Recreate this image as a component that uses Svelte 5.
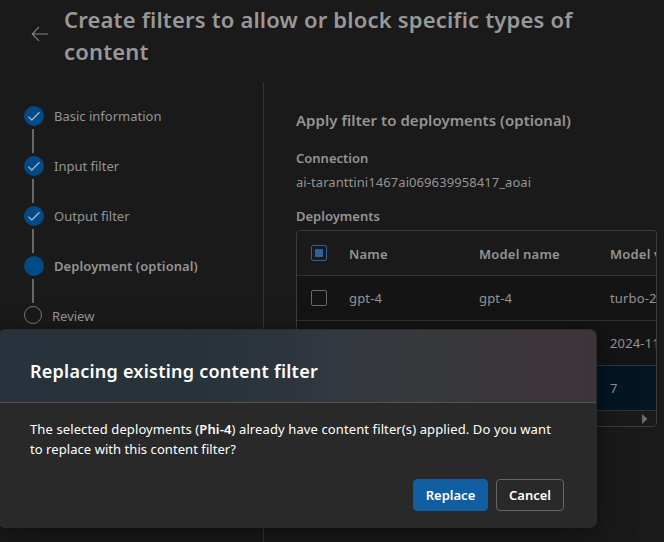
<script>
  const steps = [
    { label: 'Basic information', state: 'done' },
    { label: 'Input filter', state: 'done' },
    { label: 'Output filter', state: 'done' },
    { label: 'Deployment (optional)', state: 'current' },
    { label: 'Review', state: 'todo' },
  ];
  const rows = [
    { name: 'gpt-4', model: 'gpt-4', version: 'turbo-2024-04-09', selected: false },
    { name: 'gpt-4o', model: 'gpt-4o', version: '2024-11-20', selected: false },
    { name: 'Phi-4', model: 'Phi-4', version: '7', selected: true },
  ];
</script>

<div class="page">
  <header>
    <svg class="back" width="18" height="16" viewBox="0 0 18 16" fill="none" stroke="#858585" stroke-width="1.1">
      <path d="M8 1.2 1.2 8 8 14.8M1.2 8h15.8" />
    </svg>
    <h1>Create filters to allow or block specific types of<br />content</h1>
  </header>

  <main>
    <nav>
      {#each steps as step}
        <div class="step {step.state}">
          <div class="marker">
            <span class="dot">
              {#if step.state === 'done'}
                <svg width="20" height="20" viewBox="0 0 20 20" fill="none" stroke="#a9b4be" stroke-width="1.3">
                  <path d="M4.3 10.6 7.8 14 15.5 6.3" />
                </svg>
              {/if}
            </span>
            {#if step.state !== 'todo'}<span class="line"></span>{/if}
          </div>
          <span class="label">{step.label}</span>
        </div>
      {/each}
    </nav>

    <section>
      <h2>Apply filter to deployments (optional)</h2>
      <h3 class="conn">Connection</h3>
      <p class="value">ai-taranttini1467ai069639958417_aoai</p>
      <h3 class="dep">Deployments</h3>
      <div class="table">
        <div class="row head">
          <span class="check mixed"></span>
          <span class="c1">Name</span>
          <span class="c2">Model name</span>
          <span class="c3">Model version</span>
        </div>
        {#each rows as row}
          <div class="row" class:selected={row.selected}>
            <span class="check"></span>
            <span class="c1">{row.name}</span>
            <span class="c2">{row.model}</span>
            <span class="c3">{row.version}</span>
          </div>
        {/each}
        <div class="scroll">
          <svg width="6" height="10" viewBox="0 0 6 10"><path d="M0 0 5.5 5 0 10z" fill="#6b6b6b" /></svg>
        </div>
      </div>
    </section>
  </main>

  <div class="dialog">
    <div class="dhead">Replacing existing content filter</div>
    <div class="dbody">
      <p>The selected deployments (<b>Phi-4</b>) already have content filter(s) applied. Do you want<br /><span class="last">to replace with this content filter?</span></p>
      <div class="actions">
        <button class="primary">Replace</button>
        <button>Cancel</button>
      </div>
    </div>
  </div>
</div>

<style>
  :global(body) { background: #1a1a1a; }
  .page {
    position: relative;
    width: 664px;
    height: 542px;
    box-sizing: border-box;
    overflow: hidden;
    background: #1a1a1a;
    color: #949494;
    font: 400 13px/20px 'Noto Sans', 'Open Sans', sans-serif;
    display: flex;
    flex-direction: column;
    white-space: nowrap;
  }
  h1, h2, h3, p { margin: 0; font-weight: 600; }
  header { display: flex; height: 82px; flex: none; }
  .back { margin: 26px 15px 0 31px; flex: none; }
  h1 { font-size: 22px; line-height: 32px; margin-top: 3px; color: #989898; letter-spacing: 0.18px; }
  main { display: flex; flex: 1; min-height: 0; }
  nav { width: 239px; padding: 24px 0 0 24px; flex: none; border-right: 1px solid #333; }
  .step { display: flex; height: 50px; }
  .marker { width: 20px; display: flex; flex-direction: column; align-items: flex-start; }
  .dot { width: 20px; height: 20px; border-radius: 50%; background: #004b87; flex: none; }
  .dot svg { display: block; }
  .line { width: 2px; height: 24px; margin: 3px 0 0 8px; background: #676767; }
  .label { margin-left: 10px; line-height: 20px; }
  .current .label { font-weight: 600; letter-spacing: 0.09px; }
  .todo .dot { width: 18px; height: 18px; box-sizing: border-box; border: 1px solid #777; background: transparent; }
  .todo .marker { width: 18px; }
  section { flex: none; width: 361px; padding: 27px 0 0 32px; }
  h2 { font-size: 15px; line-height: 22px; letter-spacing: 0.04px; }
  h3 { font-size: 13px; line-height: 20px; }
  .conn { margin-top: 17px; }
  p.value { font-weight: 400; margin-top: 4px; letter-spacing: 0.07px; }
  .dep { margin-top: 14px; }
  .table { margin-top: 4px; border: 1px solid #3c3c3c; border-radius: 4px; overflow: hidden; height: 197px; box-sizing: border-box; }
  .row {
    box-sizing: border-box;
    height: 45px;
    border-bottom: 1px solid #333;
    background: #141414;
    display: flex;
    align-items: center;
    padding-left: 14px;
    overflow: hidden;
    letter-spacing: 0.15px;
  }
  .head { background: #1a1a1a; font-weight: 600; letter-spacing: 0.2px; }
  .head .c1, .head .c2, .head .c3 { padding-top: 2px; }
  .selected { background: #041524; }
  .check { width: 16px; height: 16px; box-sizing: border-box; border: 1px solid #6b6b6b; border-radius: 2px; flex: none; display: flex; align-items: center; justify-content: center; }
  .mixed { border-color: #2a6299; }
  .mixed::after { content: ''; width: 8px; height: 8px; border-radius: 1px; background: #2a6299; }
  .c1 { margin-left: 22px; width: 130px; flex: none; }
  .c2 { width: 131px; flex: none; }
  .scroll { height: 15px; display: flex; align-items: center; justify-content: flex-end; padding-right: 8px; }
  .dialog {
    position: absolute;
    left: -2px;
    top: 329px;
    width: 599px;
    height: 199px;
    box-sizing: border-box;
    border: 1px solid #2b2b2b;
    border-radius: 7px;
    overflow: hidden;
    background: #292929;
    color: #fff;
    box-shadow: 0 0 8px rgba(0, 0, 0, 0.24), 0 16px 40px rgba(0, 0, 0, 0.28);
    display: flex;
    flex-direction: column;
  }
  .dhead {
    height: 73px;
    box-sizing: border-box;
    padding: 30px 0 0 31px;
    line-height: 22px;
    font-size: 18px;
    font-weight: 600;
    letter-spacing: 0.24px;
    border-bottom: 1px solid #535353;
    background: linear-gradient(90deg, #28323c 0%, #28323b 32%, #2d343d 48%, #343840 56%, #363a3d 66%, #39383c 78%, #3c353b 90%, #3d343a 100%);
  }
  .dbody { flex: 1; padding: 16px 32px 16px 31px; display: flex; flex-direction: column; justify-content: space-between; }
  .dbody p { font-weight: 400; letter-spacing: 0.11px; }
  .last { letter-spacing: 0.06px; }
  b { font-weight: 600; }
  .actions { display: flex; justify-content: flex-end; gap: 8px; }
  button {
    box-sizing: border-box;
    height: 32px;
    width: 68px;
    padding: 0;
    border: 1px solid #666;
    border-radius: 4px;
    background: transparent;
    color: #fff;
    font: 600 13px/20px 'Noto Sans', 'Open Sans', sans-serif;
  }
  .primary { width: 75px; background: #115ea3; border-color: #115ea3; }
</style>
